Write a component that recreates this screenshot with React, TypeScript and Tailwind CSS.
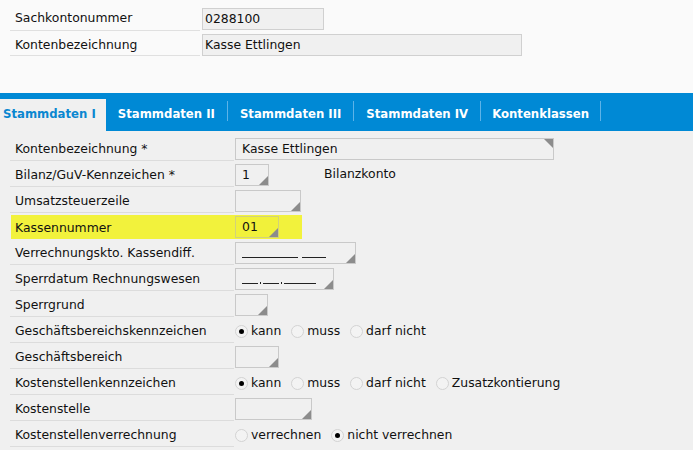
import React from "react";

type Radio = { label: string; checked?: boolean };

type Row =
  | { kind: "input"; label: string; width: number; value?: React.ReactNode; corner?: "top" | "bottom"; highlight?: boolean; after?: string }
  | { kind: "radio"; label: string; options: Radio[] };

const rows: Row[] = [
  { kind: "input", label: "Kontenbezeichnung *", width: 319, value: "Kasse Ettlingen", corner: "top" },
  { kind: "input", label: "Bilanz/GuV-Kennzeichen *", width: 34, value: "1", after: "Bilanzkonto" },
  { kind: "input", label: "Umsatzsteuerzeile", width: 66 },
  { kind: "input", label: "Kassennummer", width: 44, value: "01", highlight: true },
  {
    kind: "input",
    label: "Verrechnungskto. Kassendiff.",
    width: 121,
    value: (
      <span className="flex items-end gap-[4px] pt-[7px]">
        <span className="inline-block w-[56px] border-b border-[#222]" />
        <span className="inline-block w-[24px] border-b border-[#222]" />
      </span>
    ),
  },
  {
    kind: "input",
    label: "Sperrdatum Rechnungswesen",
    width: 99,
    value: (
      <span className="flex items-end pt-[7px]">
        <span className="inline-block w-[16px] border-b border-[#222]" />
        <span className="mx-[2px] inline-block h-[2px] w-[1px] bg-[#222]" />
        <span className="inline-block w-[16px] border-b border-[#222]" />
        <span className="mx-[2px] inline-block h-[2px] w-[1px] bg-[#222]" />
        <span className="inline-block w-[32px] border-b border-[#222]" />
      </span>
    ),
  },
  { kind: "input", label: "Sperrgrund", width: 33 },
  {
    kind: "radio",
    label: "Geschäftsbereichskennzeichen",
    options: [{ label: "kann", checked: true }, { label: "muss" }, { label: "darf nicht" }],
  },
  { kind: "input", label: "Geschäftsbereich", width: 44 },
  {
    kind: "radio",
    label: "Kostenstellenkennzeichen",
    options: [{ label: "kann", checked: true }, { label: "muss" }, { label: "darf nicht" }, { label: "Zusatzkontierung" }],
  },
  { kind: "input", label: "Kostenstelle", width: 77 },
  {
    kind: "radio",
    label: "Kostenstellenverrechnung",
    options: [{ label: "verrechnen" }, { label: "nicht verrechnen", checked: true }],
  },
];

const tabs = ["Stammdaten II", "Stammdaten III", "Stammdaten IV", "Kontenklassen"];

function Field({
  width,
  value,
  corner,
  tone,
}: {
  width: number;
  value?: React.ReactNode;
  corner?: "top" | "bottom";
  tone?: "yellow";
}) {
  return (
    <div
      className={
        "relative flex h-[22px] items-center overflow-hidden border pl-[6px] pt-[1px] " +
        (tone === "yellow" ? "border-[#d2d27a] bg-[#f1f13a]" : "border-[#c9c9c9] bg-[#f0f0f0]")
      }
      style={{ width }}
    >
      {value}
      {corner === "top" ? (
        <svg className="absolute right-0 top-0" width="9" height="9" viewBox="0 0 9 9">
          <polygon points="0,0 9,0 9,9" fill="#8c8c8c" />
        </svg>
      ) : corner === "bottom" ? (
        <svg className="absolute bottom-0 right-0" width="9" height="9" viewBox="0 0 9 9">
          <polygon points="9,0 9,9 0,9" fill="#8c8c8c" />
        </svg>
      ) : null}
    </div>
  );
}

function RadioDot({ checked }: { checked?: boolean }) {
  return (
    <span className="flex h-[13px] w-[13px] items-center justify-center rounded-full border border-[#d3d3d3] bg-[#f3f3f3]">
      {checked && <span className="h-[5px] w-[5px] rounded-full bg-black" />}
    </span>
  );
}

export default function App() {
  return (
    <div
      className="h-[450px] w-[693px] overflow-hidden bg-[#f0f0f0] text-[12.4px] text-[#111]"
      style={{ fontFamily: '"DejaVu Sans", Verdana, sans-serif' }}
    >
      {/* header */}
      <div className="h-[93px] bg-[#fafafa] pt-[5px]">
        <div className="flex h-[26px]">
          <div className="ml-[10px] flex w-[190px] items-center border-b border-[#e0e0e0] pl-[5px] pt-[2px]">Sachkontonummer</div>
          <div className="ml-[2px] flex items-start pt-[3px]">
            <div className="flex h-[22px] w-[122px] items-center border border-[#d0d0d0] bg-[#f0f0f0] pl-[2px] pt-[1px]">0288100</div>
          </div>
        </div>
        <div className="flex h-[25px]">
          <div className="ml-[10px] flex w-[190px] items-center border-b border-[#e0e0e0] pl-[5px] pt-[4px]">Kontenbezeichnung</div>
          <div className="ml-[2px] flex items-start pt-[3px]">
            <div className="flex h-[22px] w-[320px] items-center border border-[#d0d0d0] bg-[#f0f0f0] pl-[2px] pt-[1px]">Kasse Ettlingen</div>
          </div>
        </div>
      </div>

      {/* tabs */}
      <div className="flex h-[38px] items-end bg-[#0089d5] text-[11.7px] font-bold">
        <div className="flex h-[32px] items-center bg-[#f0f0f0] pl-[3px] pr-[10px] text-[#0a87d0]">Stammdaten I</div>
        {tabs.map((t, i) => (
          <div key={t} className="flex h-[32px] items-center">
            <span className={(i === 3 ? "px-[11px]" : "px-[12px]") + " text-white"}>{t}</span>
            <span className="mb-[8px] h-[20px] w-px bg-[#5db3e8]" />
          </div>
        ))}
      </div>

      {/* form */}
      <div className="pt-[4px]">
        {rows.map((r) =>
          r.kind === "input" && r.highlight ? (
            <div key={r.label} className="flex h-[26px] items-start">
              <div className="ml-[11px] mt-[2px] flex h-[24px] w-[291px] items-start bg-[#f2f23c]">
                <div className="flex h-full w-[223px] items-center pl-[4px] pt-[2px]">{r.label}</div>
                <div className="ml-[1px] mt-[1px]">
                  <Field width={r.width} value={r.value} corner="bottom" tone="yellow" />
                </div>
              </div>
            </div>
          ) : (
            <div key={r.label} className="flex h-[26px]">
              <div className="ml-[10px] flex w-[224px] items-center border-b border-[#dcdcdc] pl-[5px] pt-[4px]">{r.label}</div>
              {r.kind === "input" ? (
                <div className="ml-[1px] flex items-end pb-[1px]">
                  <Field width={r.width} value={r.value} corner={r.corner ?? "bottom"} />
                  {r.after && <span className="mb-[2px] ml-[55px]">{r.after}</span>}
                </div>
              ) : (
                <div className="ml-[1px] flex items-center pt-[3px]">
                  {r.options.map((o) => (
                    <span key={o.label} className="mr-[10px] flex items-center gap-[3px]">
                      <RadioDot checked={o.checked} />
                      <span>{o.label}</span>
                    </span>
                  ))}
                </div>
              )}
            </div>
          )
        )}
      </div>
    </div>
  );
}
